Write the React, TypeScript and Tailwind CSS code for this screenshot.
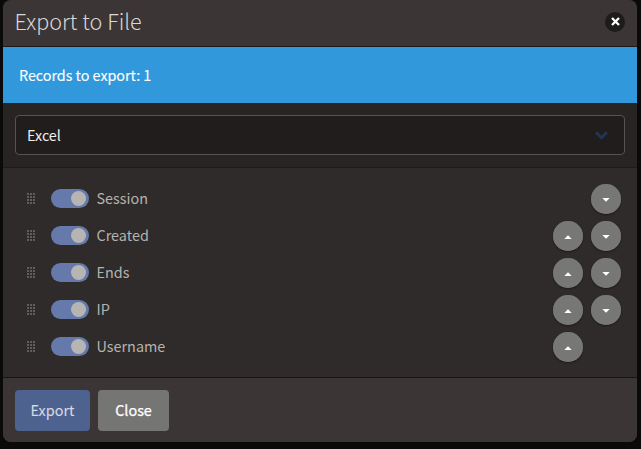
const fields = ['Session', 'Created', 'Ends', 'IP', 'Username'];

function Grip() {
  const dots = [];
  for (let r = 0; r < 4; r++) for (let c = 0; c < 3; c++) dots.push([c * 3, r * 3]);
  return (
    <svg width="8" height="11" viewBox="0 0 8 11" shapeRendering="crispEdges">
      {dots.map(([x, y]) => (
        <rect key={`${x}-${y}`} x={x} y={y} width="2" height="2" fill="#605d5c" />
      ))}
    </svg>
  );
}

function MoveButton({ direction }: { direction: 'up' | 'down' }) {
  return (
    <button
      aria-label={`Move ${direction}`}
      className="flex h-[30px] w-[30px] items-center justify-center rounded-full bg-[#777776] pt-[2px] shadow-[inset_0_0_1px_#8b8b8b,0_1px_2px_#00000070]"
    >
      <svg width="8" height="4" viewBox="0 0 8 4">
        <path d={direction === 'up' ? 'M0.3 4 4 0.3 7.7 4Z' : 'M0.3 0H7.7L4 3.7Z'} fill="#fff" />
      </svg>
    </button>
  );
}

function FieldRow({ name, first, last }: { name: string; first: boolean; last: boolean }) {
  return (
    <div className="flex h-[37px] items-center">
      <Grip />
      <span className="ml-4 flex h-[19px] w-[38px] items-center justify-end rounded-full bg-[#6579aa] pr-[3px]">
        <span className="h-[15px] w-[15px] rounded-full bg-[#b7b5b3]" />
      </span>
      <span className="ml-[7.5px] pb-px text-[14.4px] leading-5 text-[#b5b3b0]">{name}</span>
      <span className="ml-auto grid grid-cols-[30px_30px] gap-2">
        <span>{!first && <MoveButton direction="up" />}</span>
        <span>{!last && <MoveButton direction="down" />}</span>
      </span>
    </div>
  );
}

export default function App() {
  return (
    <div className="h-[449px] w-[641px] overflow-hidden bg-[#0b0a0a] pr-1 pl-[3px] font-['Noto_Sans_CJK_SC',sans-serif]">
      <div className="flex h-[442px] flex-col overflow-hidden rounded-lg bg-[#2f2b2a]">
        <header className="flex h-[47px] items-center justify-between border-b border-[#1b1919] bg-[#3b3535] pr-3 pb-[3px] pl-[11.5px]">
          <h1 className="pb-px text-[21.6px] leading-7 font-light text-[#dad8d5]">Export to File</h1>
          <button aria-label="Dismiss" className="flex h-5 w-5 items-center justify-center rounded-full bg-[#1e1b1b]">
            <svg width="9" height="9" viewBox="0 0 9 9" stroke="#fff" strokeWidth="2.3">
              <path d="M1 1 8 8M8 1 1 8" />
            </svg>
          </button>
        </header>
        <div className="flex h-14 items-center bg-[#3298dc] pl-4 text-[14.4px] leading-5 tracking-[-0.05px] text-white [-webkit-text-stroke:0.1px_#fff]">
          Records to export: 1
        </div>
        <div className="h-[65px] border-b border-[#1e1c1b] bg-[#282423] px-3 pt-3">
          <div className="flex h-10 items-center justify-between rounded border border-[#575352] bg-[#211d1c] pr-4 pl-[11px]">
            <span className="text-[14.4px] leading-5 text-[#f0efed]">Excel</span>
            <svg width="13" height="9" viewBox="0 0 13 9" fill="none" stroke="#213653" strokeWidth="2.9">
              <path d="M1 1.3 6.5 6.8 12 1.3" />
            </svg>
          </div>
        </div>
        <div className="h-[210px] border-b border-[#181615] pt-3 pr-4 pl-6">
          {fields.map((name, i) => (
            <FieldRow key={name} name={name} first={i === 0} last={i === fields.length - 1} />
          ))}
        </div>
        <footer className="flex flex-1 gap-2 bg-[#3b3535] px-3 pt-3">
          <button className="h-[41px] w-[75px] rounded bg-[#4e628f] pb-px text-[14.4px] leading-5 text-[#d4d9e2] [-webkit-text-stroke:0.1px_#d4d9e2]">Export</button>
          <button className="h-[41px] w-[71px] rounded bg-[#757574] pb-px text-[14.4px] leading-5 text-white [-webkit-text-stroke:0.25px_#fff]">Close</button>
        </footer>
      </div>
    </div>
  );
}
